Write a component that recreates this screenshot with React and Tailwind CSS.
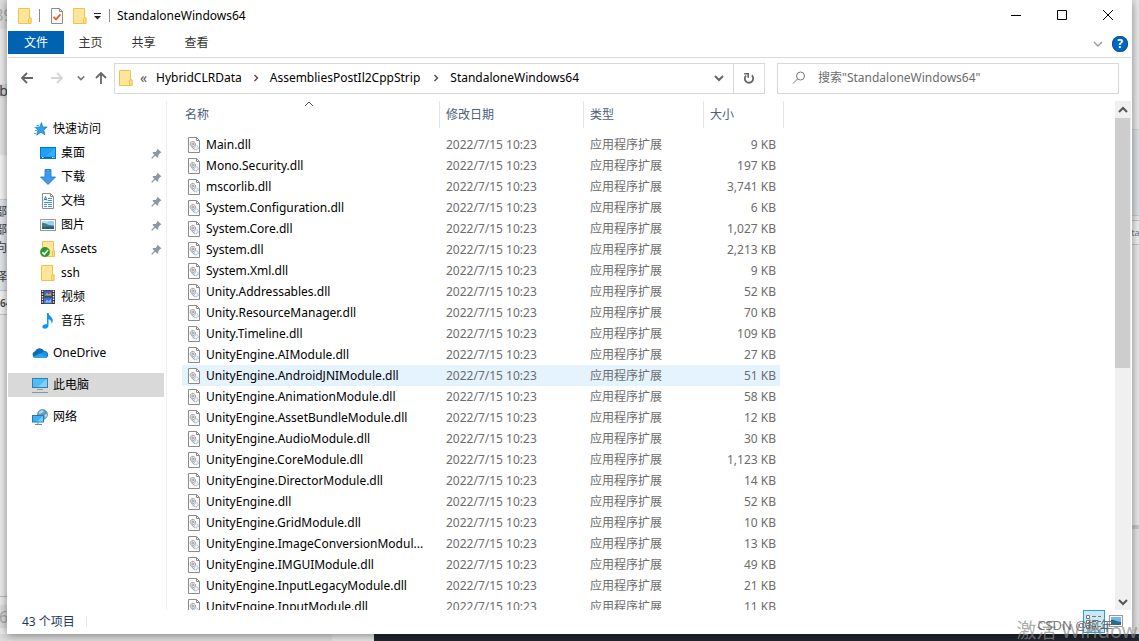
import React from "react";

const files = [
  ["Main.dll", "9 KB"],
  ["Mono.Security.dll", "197 KB"],
  ["mscorlib.dll", "3,741 KB"],
  ["System.Configuration.dll", "6 KB"],
  ["System.Core.dll", "1,027 KB"],
  ["System.dll", "2,213 KB"],
  ["System.Xml.dll", "9 KB"],
  ["Unity.Addressables.dll", "52 KB"],
  ["Unity.ResourceManager.dll", "70 KB"],
  ["Unity.Timeline.dll", "109 KB"],
  ["UnityEngine.AIModule.dll", "27 KB"],
  ["UnityEngine.AndroidJNIModule.dll", "51 KB"],
  ["UnityEngine.AnimationModule.dll", "58 KB"],
  ["UnityEngine.AssetBundleModule.dll", "12 KB"],
  ["UnityEngine.AudioModule.dll", "30 KB"],
  ["UnityEngine.CoreModule.dll", "1,123 KB"],
  ["UnityEngine.DirectorModule.dll", "14 KB"],
  ["UnityEngine.dll", "52 KB"],
  ["UnityEngine.GridModule.dll", "10 KB"],
  ["UnityEngine.ImageConversionModul...", "13 KB"],
  ["UnityEngine.IMGUIModule.dll", "49 KB"],
  ["UnityEngine.InputLegacyModule.dll", "21 KB"],
  ["UnityEngine.InputModule.dll", "11 KB"],
];
const activeFile = "UnityEngine.AndroidJNIModule.dll";

function Chevron({ dir = "down", className = "", size = 10, stroke = 2 }) {
  const d = {
    down: "M1 3 L5 7 L9 3",
    up: "M1 7 L5 3 L9 7",
    right: "M3.5 2 L6.5 5 L3.5 8",
  }[dir];
  return (
    <svg width={size} height={size} viewBox="0 0 10 10" fill="none" stroke="currentColor" strokeWidth={stroke} className={`shrink-0 ${className}`}>
      <path d={d} />
    </svg>
  );
}

function FolderIcon() {
  return (
    <svg width="16" height="16" viewBox="0 0 16 16" className="shrink-0">
      <path d="M1.5 0.5h11v9.5h1.5v5.5H1.5z" fill="#ffe599" stroke="#ecc54f" />
      <path d="M11.5 15.5V11l1-1.2h1.5v5.7z" fill="#ffe08a" stroke="#ecc54f" />
    </svg>
  );
}

function CheckDocIcon() {
  return (
    <svg width="14" height="16" viewBox="0 0 14 16" className="shrink-0">
      <path d="M1.5 0.5h8l3 3v12h-11z" fill="#fafafa" stroke="#8c8c8c" />
      <path d="M9.5 0.5v3h3" fill="none" stroke="#8c8c8c" />
      <path d="M3.5 8.8l2.5 2.6 4.5-5" fill="none" stroke="#e8622c" strokeWidth="1.9" />
    </svg>
  );
}

function DllIcon() {
  return (
    <svg width="14" height="16" viewBox="0 0 14 16" className="shrink-0">
      <path d="M1.5 0.5h8l3 3v12h-11z" fill="#fcfcfc" stroke="#8b8b8b" />
      <path d="M9.5 0.5v3h3" fill="none" stroke="#8b8b8b" />
      <circle cx="5.8" cy="7" r="2.6" fill="#f1f1f1" stroke="#858585" strokeWidth="1" strokeDasharray="1.4 .7" />
      <circle cx="5.8" cy="7" r="1" fill="#fff" stroke="#808080" strokeWidth=".8" />
      <circle cx="9.200" cy="10.8" r="2" fill="#edf5fb" stroke="#82abcc" strokeWidth="1" strokeDasharray="1.2 .6" />
      <path d="M4.500 9.800l3.200 3" stroke="#8c9196" strokeWidth=".9" />
    </svg>
  );
}

function StarIcon() {
  return (
    <svg width="16" height="16" viewBox="0 0 16 16" className="shrink-0">
      <path d="M9.5 1.5l1.3 4.4 4.4.1-3.4 2.9 1.1 4.8-4-2.5-4.2 3 1.2-5L3.5 6.3 7.8 6z" fill="#2fa0ee" stroke="#1679c8" strokeWidth=".7" />
      <path d="M4.500 4.5h2.500M2.500 6.500h2M3 9.500h2M2 12.500h2" stroke="#4aaff0" strokeWidth="1" />
    </svg>
  );
}

function DesktopIcon() {
  return (
    <svg width="16" height="16" viewBox="0 0 16 16" className="shrink-0">
      <rect x=".5" y="2.500" width="15" height="11" fill="#1ba1f5" stroke="#0b78bd" />
      <path d="M15 3v8H6z" fill="#35aefb" />
      <path d="M1 12.500h14" stroke="#0b69ad" />
      <path d="M2 12.500h1.500M12 12.500h1M13.500 12.500h1" stroke="#cdeaff" />
    </svg>
  );
}

function DownloadIcon() {
  return (
    <svg width="16" height="16" viewBox="0 0 16 16" className="shrink-0">
      <path d="M5 .5h6v7.500h4.500L8 15.500.5 8H5z" fill="#3c9beb" stroke="#2a7dc9" strokeWidth=".9" />
    </svg>
  );
}

function DocumentIcon() {
  return (
    <svg width="16" height="16" viewBox="0 0 16 16" className="shrink-0">
      <path d="M2.500.5h8l3 3v12h-11z" fill="#fdfdfd" stroke="#8c8c8c" />
      <path d="M10.500.5v3h3" fill="none" stroke="#8c8c8c" />
      <path d="M8 5.500h4M8 7.500h4M4 9.500h8M4 11.500h3M8 11.500h4M4 13.500h3M8 13.500h4" stroke="#3f93cc" />
      <path d="M4 7.500l1.500-4L7 7.500M4.500 6.500h2" fill="none" stroke="#2d7fb8" />
    </svg>
  );
}

function PictureIcon() {
  return (
    <svg width="16" height="16" viewBox="0 0 16 16" className="shrink-0">
      <rect x=".5" y="2.500" width="15" height="11" fill="#fff" stroke="#9a9a9a" />
      <rect x="2" y="4" width="12" height="8" fill="#9ccdf3" />
      <path d="M2 6.500c3-1.500 4 1 7 1.500s3 .5 5 .5V12H2z" fill="#427d77" />
      <path d="M2 10.500c4-1 8-.5 12-1V12H2z" fill="#235b88" />
      <path d="M3 5h5" stroke="#d9eefc" />
    </svg>
  );
}

function SyncedFolderIcon() {
  return (
    <svg width="16" height="16" viewBox="0 0 16 16" className="shrink-0">
      <path d="M2.500.5h11v9.500h1v5.500h-12z" fill="#ffe599" stroke="#ecc54f" />
      <path d="M12.500 15.500V10h2v5.500z" fill="#ffe08a" stroke="#ecc54f" />
      <circle cx="5" cy="11" r="4.900" fill="#2f9a23" />
      <path d="M2.300 11.300l2 2 3.700-4.300" fill="none" stroke="#fff" strokeWidth="1.600" />
    </svg>
  );
}

function VideoIcon() {
  return (
    <svg width="16" height="16" viewBox="0 0 16 16" className="shrink-0">
      <rect x="1" y="1" width="14" height="14" fill="#333" />
      <path d="M2.500 1.500v13M13.500 1.500v13" stroke="#eee" strokeWidth="1.400" strokeDasharray="1.500 1.200" />
      <rect x="4" y="1.500" width="8" height="6" fill="#3166c7" />
      <rect x="4" y="8.500" width="8" height="6" fill="#3975d8" />
      <path d="M5 6.500l2-3 1.500 2L11 3v3.500z" fill="#e0a23b" />
      <path d="M5 13.500l2-3 1.500 2 2.500-2.500v3.500z" fill="#9dbbe9" />
      <path d="M9 2.500h2v2H9z" fill="#c8453d" />
    </svg>
  );
}

function MusicIcon() {
  return (
    <svg width="16" height="16" viewBox="0 0 16 16" className="shrink-0">
      <path d="M7 0h1.500c.2 3 4.300 4 4.300 7.300 0 1.500-.6 2.600-1.300 3.700.5-3-1.200-4.300-3-4.800v6.300c0 1.900-1.600 3.300-3.500 3.300-1.600 0-2.700-.8-2.700-2 0-1.700 2.200-3 4.700-2.500z" fill="#0f97ee" />
    </svg>
  );
}

function OneDriveIcon() {
  return (
    <svg width="16" height="16" viewBox="0 0 16 16" className="shrink-0">
      <path d="M3.500 13A3.500 3.500 0 0 1 3 6.200 5.200 5.200 0 0 1 12.200 6 3.500 3.500 0 0 1 13 13z" fill="#0f6cbd" />
      <path d="M9 8.500l3.200-2.300A3.500 3.500 0 0 1 13 13l-2-.5z" fill="#1b8fe0" />
      <path d="M1.200 12l7-3.800L14.800 12c-.6.700-1.200 1-2 1H3.500c-1 0-1.800-.4-2.300-1z" fill="#29a3ec" />
    </svg>
  );
}

function ComputerIcon() {
  return (
    <svg width="16" height="16" viewBox="0 0 16 16" className="shrink-0">
      <rect x=".5" y="1.500" width="15" height="9" fill="#4fbdfc" stroke="#3a7ea8" />
      <path d="M15 2v8H6z" fill="#7bd2ff" />
      <path d="M5 12.500h6" stroke="#8c9aa5" />
      <path d="M0 15.500h16" stroke="#7f98a8" />
    </svg>
  );
}

function NetworkIcon() {
  return (
    <svg width="16" height="16" viewBox="0 0 16 16" className="shrink-0">
      <circle cx="10.500" cy="5.500" r="5" fill="#5c9fc2" stroke="#4a87a8" strokeWidth=".7" />
      <path d="M7 3c2-2 4-2 5-1l-2 2-3 1zM12.500 6l2.500-1v2l-2 2z" fill="#b5d9e9" />
      <rect x=".5" y="6.500" width="11" height="6.500" fill="#3db2f8" stroke="#2b79a8" />
      <path d="M11 7v5.500H5z" fill="#72ceff" />
      <path d="M3 15.500h7M6 13v2" stroke="#5f90ab" />
    </svg>
  );
}

function PinIcon() {
  return (
    <svg width="11" height="11" viewBox="0 0 11 11" className="shrink-0">
      <path d="M6.300.6l4.200 4-1.300.5-1.700 1.700-.3 2.500-.9.500L1.500 5l.6-.9 2.500-.2 1.700-1.900z" fill="#8a97a3" />
      <path d="M4 7L.6 10.400" stroke="#8a97a3" strokeWidth="1.200" />
    </svg>
  );
}

function Arrow({ dir }) {
  const d = {
    left: "M13 7H2M7 2L2 7l5 5",
    right: "M1 7h11M7 2l5 5-5 5",
    up: "M7 13V2M2 7l5-5 5 5",
  }[dir];
  return (
    <svg width="14" height="14" viewBox="0 0 14 14" fill="none" stroke="currentColor" strokeWidth="1.800" className="shrink-0">
      <path d={d} />
    </svg>
  );
}

function NavItem({ icon, label, nested, pinned, selected }) {
  return (
    <a
      href="#"
      className={`flex h-6 items-center gap-[5px] pr-[2px] ${nested ? "pl-8" : "pl-6"} ${selected ? "bg-[#d9d9d9]" : ""}`}
    >
      {icon}
      <span className="flex-1 whitespace-nowrap">{label}</span>
      {pinned && <PinIcon />}
    </a>
  );
}

function Sidebar() {
  return (
    <nav aria-label="导航" className="flex w-[159px] shrink-0 flex-col gap-2 border-r border-[#f0f0f0] pt-4 pr-[2px] text-black">
      <div className="flex flex-col">
        <NavItem icon={<StarIcon />} label="快速访问" />
        <NavItem icon={<DesktopIcon />} label="桌面" nested pinned />
        <NavItem icon={<DownloadIcon />} label="下载" nested pinned />
        <NavItem icon={<DocumentIcon />} label="文档" nested pinned />
        <NavItem icon={<PictureIcon />} label="图片" nested pinned />
        <NavItem icon={<SyncedFolderIcon />} label="Assets" nested pinned />
        <NavItem icon={<FolderIcon />} label="ssh" nested />
        <NavItem icon={<VideoIcon />} label="视频" nested />
        <NavItem icon={<MusicIcon />} label="音乐" nested />
      </div>
      <NavItem icon={<OneDriveIcon />} label="OneDrive" />
      <NavItem icon={<ComputerIcon />} label="此电脑" selected />
      <NavItem icon={<NetworkIcon />} label="网络" />
    </nav>
  );
}

function HeaderCell({ label, sorted }) {
  return (
    <th scope="col" className="h-[33px] p-0 align-top font-normal">
      <button className={`relative flex h-[27px] w-full items-center border-r border-[#e5e5e5] text-left ${sorted ? "pl-[3px]" : "pl-[6px]"}`}>
        {label}
        {sorted && <Chevron dir="up" stroke={1} className="absolute -top-[2px] left-[122px] text-[#555]" />}
      </button>
    </th>
  );
}

function FileTable() {
  return (
    <table className="w-[602px] table-fixed border-collapse self-start">
      <colgroup>
        <col className="w-[258px]" />
        <col className="w-[144px]" />
        <col className="w-[120px]" />
        <col className="w-[76px]" />
        <col className="w-[4px]" />
      </colgroup>
      <thead className="text-[#4c607a]">
        <tr>
          <HeaderCell label="名称" sorted />
          <HeaderCell label="修改日期" />
          <HeaderCell label="类型" />
          <th scope="col" colSpan={2} className="p-0 align-top font-normal">
            <button className="flex h-[27px] w-full items-center border-r border-[#e5e5e5] pl-[6px] text-left">大小</button>
          </th>
        </tr>
      </thead>
      <tbody className="text-[#6d6d6d]">
        {files.map(([name, size]) => {
          const tint = name === activeFile ? "bg-[#e5f3ff]" : "";
          return (
            <tr key={name} className="h-[21px]">
              <td className={`p-0 pl-[5px] ${tint}`}>
                <div className="flex h-[21px] items-center gap-[5px] whitespace-nowrap text-black">
                  <DllIcon />
                  {name}
                </div>
              </td>
              <td className={`p-0 pl-[6px] ${tint}`}>2022/7/15 10:23</td>
              <td className={`p-0 pl-[6px] ${tint}`}>应用程序扩展</td>
              <td className={`p-0 pr-[4px] text-right whitespace-nowrap ${tint}`}>{size}</td>
              <td className="p-0" />
            </tr>
          );
        })}
      </tbody>
    </table>
  );
}

function ScrollBar() {
  return (
    <div className="flex w-4 shrink-0 flex-col bg-[#f0f0f0] text-[#555]">
      <button aria-label="向上滚动" className="flex h-[17px] items-center justify-center">
        <Chevron dir="up" />
      </button>
      <div className="mr-px h-[250px] bg-[#cdcdcd]" />
      <div className="flex-1" />
      <button aria-label="向下滚动" className="flex h-[17px] items-center justify-center">
        <Chevron />
      </button>
    </div>
  );
}

function TitleBar() {
  return (
    <header className="flex h-[31px] shrink-0 items-center pl-[9px]">
      <FolderIcon />
      <span className="ml-[6px] h-[13px] w-px bg-[#8a8a8a]" />
      <button aria-label="属性" className="ml-[10px]"><CheckDocIcon /></button>
      <button aria-label="新建文件夹" className="ml-[8px]"><FolderIcon /></button>
      <button aria-label="自定义快速访问工具栏" className="ml-[6px]">
        <svg width="8" height="8" viewBox="0 0 8 8"><path d="M0 1.500h7" stroke="#222" /><path d="M0 4h7L3.500 7.500z" fill="#222" /></svg>
      </button>
      <span className="ml-[7px] h-[13px] w-px bg-[#8a8a8a]" />
      <h1 className="ml-[7px] flex-1 text-black">StandaloneWindows64</h1>
      <div className="flex h-[30px] self-start text-black">
        <button aria-label="最小化" className="flex w-[46px] items-center justify-center">
          <svg width="10" height="10" viewBox="0 0 10 10"><path d="M0 5.500h10" stroke="currentColor" /></svg>
        </button>
        <button aria-label="最大化" className="flex w-[46px] items-center justify-center">
          <svg width="10" height="10" viewBox="0 0 10 10"><path d="M.5.5h9v9h-9z" fill="none" stroke="currentColor" /></svg>
        </button>
        <button aria-label="关闭" className="flex w-[46px] items-center justify-center">
          <svg width="10" height="10" viewBox="0 0 10 10"><path d="M0 0l10 10M10 0L0 10" stroke="currentColor" /></svg>
        </button>
      </div>
    </header>
  );
}

function Ribbon() {
  return (
    <div className="flex h-[27px] shrink-0 items-start border-b border-[#dadbdc] pr-[3px] text-[#333]">
      <button className="h-[23px] w-14 bg-[#0063b1] text-white">文件</button>
      {["主页", "共享", "查看"].map((t) => (
        <button key={t} className="h-6 w-[53px]">{t}</button>
      ))}
      <div className="flex flex-1 items-center justify-end gap-[9px] self-stretch">
        <button aria-label="展开功能区"><Chevron stroke={1.3} className="text-[#999]" /></button>
        <button aria-label="帮助" className="flex h-4 w-4 items-center justify-center rounded-full bg-[#0067c0] text-xs leading-4 font-bold text-white ring-1 ring-[#0a539a] ring-inset">?</button>
      </div>
    </div>
  );
}

function AddressRow() {
  return (
    <div className="flex h-10 shrink-0 items-center pr-3 pl-3 text-black">
      <button aria-label="后退" className="text-[#666]"><Arrow dir="left" /></button>
      <button aria-label="前进" className="ml-4 text-[#d5d5d5]"><Arrow dir="right" /></button>
      <button aria-label="最近浏览的位置" className="ml-[13px] text-[#777]"><Chevron size={8} /></button>
      <button aria-label="上移" className="ml-[9px] text-[#666]"><Arrow dir="up" /></button>
      <div className="ml-[6px] flex h-[31px] min-w-0 flex-1 items-center border border-[#d9d9d9] pl-[3px]">
        <FolderIcon />
        <span className="ml-[6px] w-[9px] text-sm leading-4 text-[#555]">«</span>
        <a href="#" className="ml-[7px]">HybridCLRData</a>
        <Chevron dir="right" stroke={1.5} className="mx-[9px] text-[#555]" />
        <a href="#">AssembliesPostIl2CppStrip</a>
        <Chevron dir="right" stroke={1.5} className="mr-[9px] ml-[11px] text-[#555]" />
        <a href="#">StandaloneWindows64</a>
        <span className="flex-1" />
        <button aria-label="以前的位置" className="flex h-full w-7 items-center justify-center text-[#666]"><Chevron /></button>
        <button aria-label="刷新" className="flex h-full w-[31px] items-center justify-center border-l border-[#d9d9d9] text-[#666]">
          <svg width="12" height="12" viewBox="0 0 12 12" fill="none" stroke="currentColor" strokeWidth="1.800">
            <path d="M3 3.600A4.200 4.200 0 1 0 8.800 3.400" />
            <path d="M1.200 1.700h4v4" strokeWidth="1.600" />
          </svg>
        </button>
      </div>
      <label className="ml-3 flex h-[31px] w-[342px] items-center gap-3 border border-[#d9d9d9] pl-[14px]">
        <svg width="14" height="14" viewBox="0 0 14 14" fill="none" stroke="#777" className="shrink-0">
          <circle cx="8.500" cy="5" r="4" />
          <path d="M5.500 8L1 12.500" />
        </svg>
        <input aria-label="搜索" placeholder={'搜索"StandaloneWindows64"'} className="min-w-0 flex-1 outline-none placeholder:text-[#6d6d6d]" />
      </label>
    </div>
  );
}

function StatusBar() {
  return (
    <footer className="flex h-6 shrink-0 items-start pr-[7px] pl-[14px] text-[#1e395b]">
      <span className="flex h-6 items-center">43 个项目</span>
      <span className="mt-[6px] ml-[11px] h-[11px] w-px bg-[#e8e8e8]" />
      <span className="flex-1" />
      <button aria-label="详细信息" className="flex h-[23px] w-[22px] items-center justify-center border border-[#26a0da] bg-[#cbe8f6]">
        <svg width="16" height="14" viewBox="0 0 16 14" stroke="#777" fill="none">
          <path d="M.5.5h3v3h-3zM.5 5.500h3v3h-3zM.5 10.500h3v3h-3z" fill="#fff" />
          <path d="M6 1.500h4M12 1.500h3M6 6.500h4M12 6.500h3M6 11.500h4M12 11.500h3" />
        </svg>
      </button>
      <button aria-label="大缩略图" className="ml-[3px] flex h-[23px] items-center">
        <svg width="16" height="13" viewBox="0 0 16 13">
          <rect x="1.500" y=".5" width="13" height="11" fill="#fff" stroke="#999" />
          <rect x="3" y="2" width="10" height="8" fill="#73b7ec" />
          <path d="M3 5c3-1 5 2 10 2v3H3z" fill="#2d6a86" />
        </svg>
      </button>
    </footer>
  );
}

function LeftBackdrop() {
  return (
    <div aria-hidden="true" className="flex w-[7px] shrink-0 flex-col overflow-hidden bg-[#ebebeb] text-xs leading-[18px] text-[#444]">
      <div className="flex h-[29px] items-center justify-center bg-[#dedede] text-base text-[#aaa]">89</div>
      <div className="h-[55px]" />
      <div className="flex h-[14px] items-center justify-center bg-[#d6dade] text-sm">b</div>
      <div className="h-[57px] bg-[#e4e4e4]" />
      <div className="h-[45px] border-b border-[#cfcfcf] bg-[#f4f4f4]" />
      <div className="flex h-[91px] flex-col items-end border-b border-[#c8c8c8] bg-[#e3e6ea] pt-[3px]">
        <span className="w-3">部</span>
        <span className="w-3">部</span>
        <span className="w-3">向</span>
        <span className="mt-[11px] w-3">择</span>
      </div>
      <div className="flex h-6 items-center border-b border-[#c8c8c8] bg-[#f4f4f4] text-[10px] font-semibold">64</div>
      <div className="h-[282px] border-b border-[#bbb]" />
      <div className="h-[8px]" />
      <div className="flex h-[23px] items-center justify-center bg-[#dcdcdc] text-base text-[#aaa]">6</div>
    </div>
  );
}

function RightBackdrop() {
  return (
    <div aria-hidden="true" className="flex w-[7px] shrink-0 flex-col overflow-hidden bg-[#e9e9e9] text-[9px] text-[#777]">
      <div className="h-[130px] border-b border-[#cfcfcf]" />
      <div className="h-[86px] border-b border-[#c8ccd0] bg-[#dcdfe3]" />
      <div className="h-[5px] border-b border-[#c4c4c4]" />
      <div className="flex h-6 items-center justify-center border-b border-[#c4c4c4] bg-[#f0f0f0]">ta</div>
      <div className="h-[284px] border-b-4 border-[#c6c6c6]" />
      <div className="flex-1 bg-[#e4e4e4]" />
    </div>
  );
}

export default function App() {
  return (
    <div className="relative flex h-screen flex-col overflow-hidden bg-[#e2e2e2] font-['Noto_Sans','Noto_Sans_CJK_SC',sans-serif] text-xs">
      <div className="flex min-h-0 flex-1">
        <LeftBackdrop />
        <main className="z-10 flex min-w-0 flex-1 flex-col bg-white px-px shadow-[0_1px_9px_rgba(0,0,0,0.45)]">
          <TitleBar />
          <Ribbon />
          <AddressRow />
          <div className="flex min-h-0 flex-1 overflow-hidden pt-[3px]">
            <Sidebar />
            <div className="flex min-w-0 flex-1 items-start self-stretch overflow-hidden pl-[15px]">
              <FileTable />
            </div>
            <ScrollBar />
          </div>
          <StatusBar />
        </main>
        <RightBackdrop />
      </div>
      <div aria-hidden="true" className="flex h-[7px] shrink-0">
        <div className="w-[332px] bg-[#dcdcdc]" />
        <div className="w-[42px] bg-[#e6e6e6]" />
        <div className="flex-1 bg-[#22252d]" />
      </div>
      <span className="pointer-events-none absolute -right-2 -bottom-1 z-20 text-xl leading-7 whitespace-nowrap text-[#8a8a8a]/70">激活 Windows</span>
      <span className="pointer-events-none absolute right-[26px] bottom-[8px] z-20 text-[13px] leading-4 whitespace-nowrap text-[#555]/80">CSDN @枫年</span>
    </div>
  );
}
